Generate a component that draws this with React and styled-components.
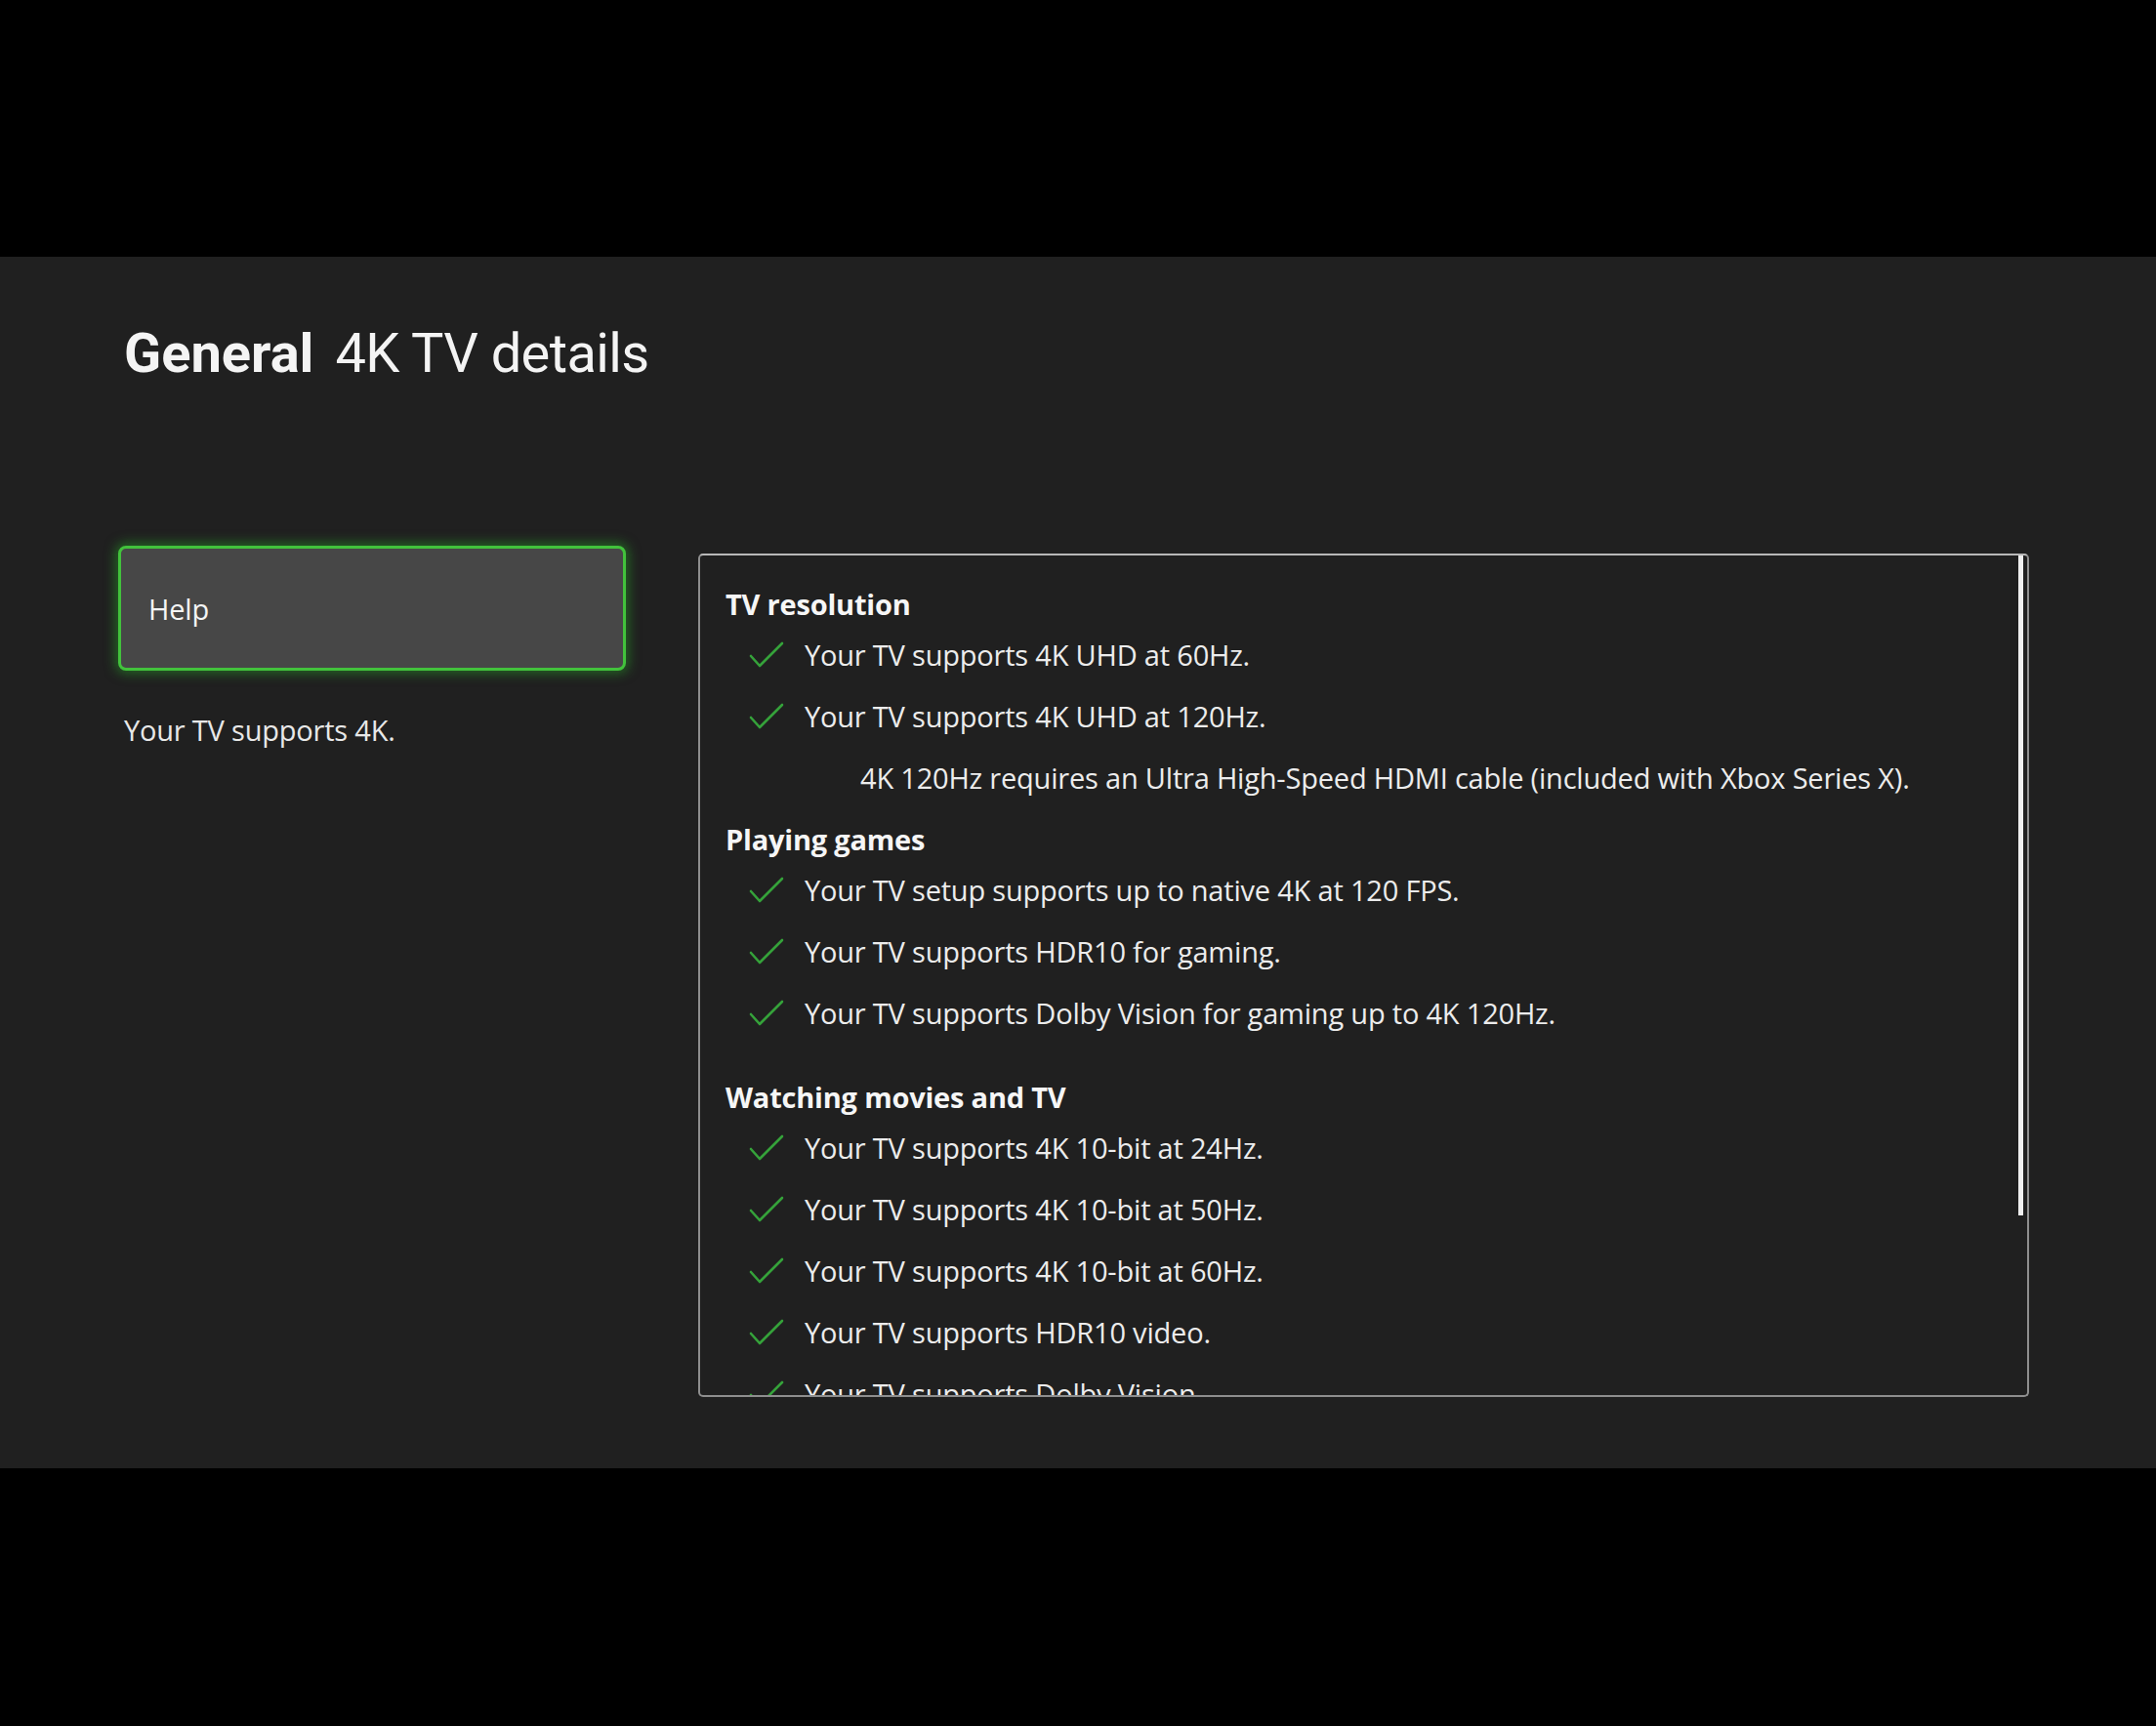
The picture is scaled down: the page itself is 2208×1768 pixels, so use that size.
import styled, { createGlobalStyle } from 'styled-components';

const GlobalStyle = createGlobalStyle`
  html, body {
    margin: 0;
    padding: 0;
    background: #000;
  }
  * {
    box-sizing: border-box;
  }
`;

const Screen = styled.div`
  width: 2208px;
  height: 1768px;
  display: flex;
  flex-direction: column;
  background: #000;
  color: #f2f2f2;
  font-family: 'Open Sans', 'Noto Sans', sans-serif;
  letter-spacing: -0.2px;
`;

const Letterbox = styled.div`
  height: ${p => p.$h}px;
  background: #000;
  flex-shrink: 0;
`;

const Panel = styled.main`
  flex: 1;
  background: #202020;
  padding: 64px 0 0 127px;
  display: flex;
  flex-direction: column;
`;

const Title = styled.h1`
  margin: 0;
  font-family: Roboto, 'Liberation Sans', sans-serif;
  font-size: 56px;
  line-height: 70px;
  font-weight: 400;
  letter-spacing: 0;
  color: #f4f4f4;
  display: flex;
  gap: 22px;

  & > b {
    font-weight: 700;
  }

  & > span {
    letter-spacing: -0.6px;
  }
`;

const Columns = styled.div`
  display: flex;
  align-items: flex-start;
  margin-top: 162px;
  margin-left: -6px;
  gap: 74px;
`;

const SideColumn = styled.div`
  width: 520px;
  display: flex;
  flex-direction: column;
  gap: 41px;
`;

const HelpButton = styled.button`
  height: 128px;
  width: 100%;
  display: flex;
  align-items: center;
  padding: 0 28px;
  background: #474747;
  border: 3px solid #42c23c;
  border-radius: 8px;
  box-shadow: 0 0 12px 3px rgba(40, 170, 40, 0.5);
  color: #f4f4f4;
  font-family: inherit;
  font-size: 29px;
  letter-spacing: -0.2px;
  text-align: left;
`;

const SideText = styled.p`
  margin: 0 0 0 6px;
  font-size: 29px;
  line-height: 40px;
  color: #e8e8e8;
`;

const DetailsBox = styled.section`
  position: relative;
  margin-top: 8px;
  width: 1363px;
  height: 864px;
  border: 2px solid #8e8e8e;
  border-top-color: #b8b8b8;
  border-radius: 5px;
  overflow: hidden;
  padding: 29px 0 0 26px;
`;

const ScrollThumb = styled.div`
  position: absolute;
  top: 0;
  right: 4px;
  width: 5px;
  height: 676px;
  background: #f0f0f0;
`;

const Section = styled.div`
  margin-top: ${p => p.$gap || 0}px;
`;

const Heading = styled.h2`
  margin: 0;
  font-size: 29px;
  line-height: 41px;
  font-weight: 700;
  color: #f6f6f6;
`;

const Row = styled.div`
  height: 63px;
  display: flex;
  align-items: center;
  padding-left: ${p => (p.$note ? 138 : 24)}px;
  font-size: 29px;
  color: #ececec;
  white-space: nowrap;
`;

const CheckMark = styled.svg`
  width: 36px;
  height: 28px;
  margin-right: 21px;
  flex-shrink: 0;
`;

const Check = () => (
  <CheckMark viewBox="0 0 36 28">
    <polyline
      points="2,15 11,25 34,2"
      fill="none"
      stroke="#35a23a"
      strokeWidth="2.6"
      strokeLinecap="round"
      strokeLinejoin="round"
    />
  </CheckMark>
);

const sections = [
  {
    title: 'TV resolution',
    rows: [
      { text: 'Your TV supports 4K UHD at 60Hz.' },
      { text: 'Your TV supports 4K UHD at 120Hz.' },
      { text: '4K 120Hz requires an Ultra High-Speed HDMI cable (included with Xbox Series X).', note: true },
    ],
  },
  {
    title: 'Playing games',
    gap: 11,
    rows: [
      { text: 'Your TV setup supports up to native 4K at 120 FPS.' },
      { text: 'Your TV supports HDR10 for gaming.' },
      { text: 'Your TV supports Dolby Vision for gaming up to 4K 120Hz.' },
    ],
  },
  {
    title: 'Watching movies and TV',
    gap: 34,
    rows: [
      { text: 'Your TV supports 4K 10-bit at 24Hz.' },
      { text: 'Your TV supports 4K 10-bit at 50Hz.' },
      { text: 'Your TV supports 4K 10-bit at 60Hz.' },
      { text: 'Your TV supports HDR10 video.' },
      { text: 'Your TV supports Dolby Vision.' },
    ],
  },
];

export default function App() {
  return (
    <>
      <GlobalStyle />
      <Screen>
        <Letterbox $h={263} />
        <Panel>
          <Title>
            <b>General</b>
            <span>4K TV details</span>
          </Title>
          <Columns>
            <SideColumn>
              <HelpButton>Help</HelpButton>
              <SideText>Your TV supports 4K.</SideText>
            </SideColumn>
            <DetailsBox>
              {sections.map(section => (
                <Section key={section.title} $gap={section.gap}>
                  <Heading>{section.title}</Heading>
                  {section.rows.map(row => (
                    <Row key={row.text} $note={row.note}>
                      {!row.note && <Check />}
                      {row.text}
                    </Row>
                  ))}
                </Section>
              ))}
              <ScrollThumb />
            </DetailsBox>
          </Columns>
        </Panel>
        <Letterbox $h={264} />
      </Screen>
    </>
  );
}
